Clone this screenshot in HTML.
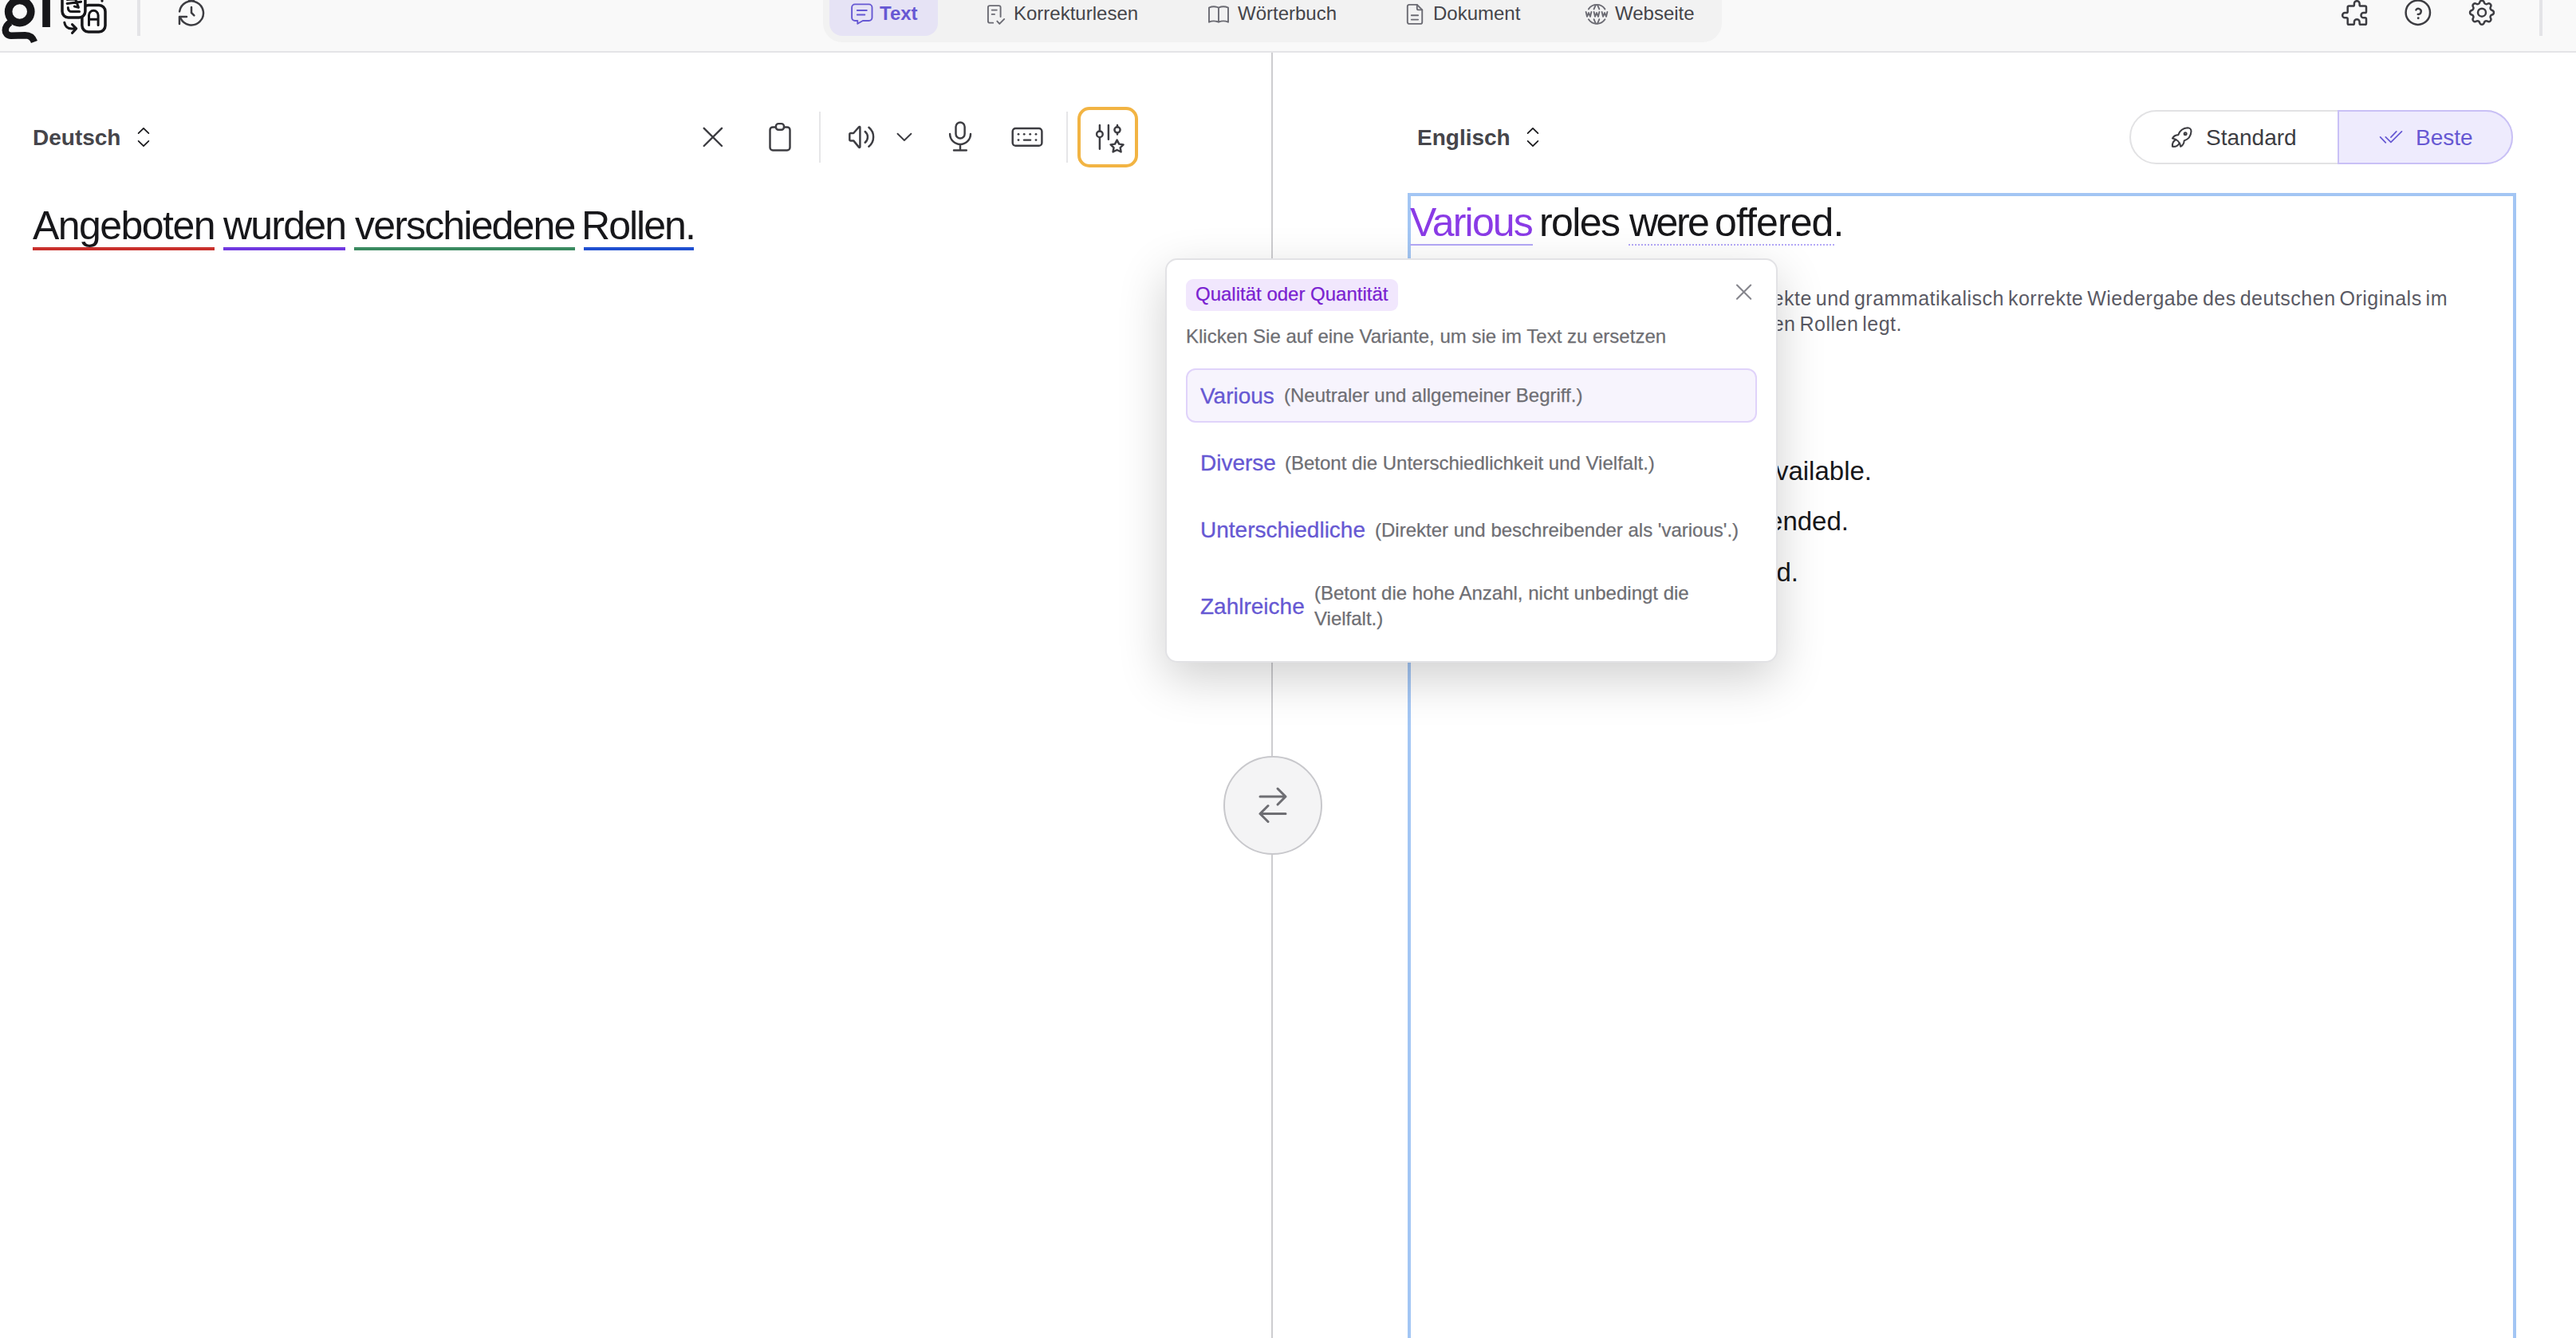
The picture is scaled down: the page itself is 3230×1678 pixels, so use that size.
<!DOCTYPE html>
<html><head><meta charset="utf-8">
<style>
html,body{margin:0;padding:0;}
body{width:3230px;height:1678px;overflow:hidden;position:relative;background:#fff;font-family:"Liberation Sans",sans-serif;color:#17171a;}
.a{position:absolute;}
.t{position:absolute;white-space:nowrap;}
svg.ic{position:absolute;left:0;top:0;overflow:visible;}
.st{fill:none;stroke-linecap:round;stroke-linejoin:round;}
</style></head><body>

<!-- HEADER -->
<div class="a" style="left:0;top:0;width:3230px;height:64px;background:#f9f9f9;"></div>
<div class="a" style="left:0;top:64px;width:3230px;height:2px;background:#e4e4e7;"></div>
<div class="a" style="left:172px;top:0;width:4px;height:45px;background:#e4e4e7;"></div>
<div class="a" style="left:3184px;top:0;width:4px;height:45px;background:#e4e4e7;"></div>

<!-- nav -->
<div class="a" style="left:1032px;top:-30px;width:1127px;height:83px;background:#f2f2f2;border-radius:24px;"></div>
<div class="a" style="left:1040px;top:-30px;width:136px;height:75px;background:#e6e3f5;border-radius:16px;"></div>
<div class="t" style="left:1103px;top:5px;font-size:24px;line-height:24px;font-weight:700;color:#6658d3;">Text</div>
<div class="t" style="left:1271px;top:5px;font-size:24px;line-height:24px;color:#45454a;">Korrekturlesen</div>
<div class="t" style="left:1552px;top:5px;font-size:24px;line-height:24px;color:#45454a;">Wörterbuch</div>
<div class="t" style="left:1797px;top:5px;font-size:24px;line-height:24px;color:#45454a;">Dokument</div>
<div class="t" style="left:2025px;top:5px;font-size:24px;line-height:24px;color:#45454a;">Webseite</div>

<!-- main divider -->
<div class="a" style="left:1594px;top:66px;width:2px;height:1612px;background:#cdcdd0;"></div>

<!-- toolbar dividers -->
<div class="a" style="left:1027px;top:140px;width:2px;height:64px;background:#e6e6e8;"></div>
<div class="a" style="left:1337px;top:140px;width:2px;height:64px;background:#e6e6e8;"></div>
<div class="a" style="left:1351px;top:134px;width:68px;height:68px;border:4px solid #f2b443;border-radius:15px;"></div>

<!-- Language labels -->
<div class="t" style="left:41px;top:159px;font-size:28px;line-height:28px;font-weight:700;color:#45454a;">Deutsch</div>
<div class="t" style="left:1777px;top:159px;font-size:28px;line-height:28px;font-weight:700;color:#45454a;">Englisch</div>

<!-- toggle -->
<div class="a" style="left:2670px;top:138px;width:481px;height:68px;border-radius:34px;border:2px solid #e2e2e4;box-sizing:border-box;background:#fff;"></div>
<div class="a" style="left:2931px;top:138px;width:220px;height:68px;border-radius:0 34px 34px 0;border:2px solid #c9c0f6;box-sizing:border-box;background:#eeebfd;"></div>
<div class="t" style="left:2766px;top:159px;font-size:28px;line-height:28px;color:#3d3d42;">Standard</div>
<div class="t" style="left:3029px;top:159px;font-size:28px;line-height:28px;color:#6658d3;">Beste</div>

<!-- source text -->
<div class="t" style="left:41px;top:258px;font-size:50px;line-height:50px;letter-spacing:-1.55px;">Angeboten</div>
<div class="t" style="left:280px;top:258px;font-size:50px;line-height:50px;letter-spacing:-1.8px;">wurden</div>
<div class="t" style="left:445px;top:258px;font-size:50px;line-height:50px;letter-spacing:-1.82px;">verschiedene</div>
<div class="t" style="left:729px;top:258px;font-size:50px;line-height:50px;letter-spacing:-1.97px;">Rollen.</div>
<div class="a" style="left:41px;top:310px;width:228px;height:4px;background:#c9302c;"></div>
<div class="a" style="left:280px;top:310px;width:153px;height:4px;background:#7038e0;"></div>
<div class="a" style="left:444px;top:310px;width:277px;height:4px;background:#3a8a60;"></div>
<div class="a" style="left:732px;top:310px;width:138px;height:4px;background:#1f4fd0;"></div>

<!-- swap -->
<div class="a" style="left:1534px;top:948px;width:120px;height:120px;border:2px solid #c8c8cc;border-radius:50%;background:#f4f4f5;"></div>

<!-- blue box -->
<div class="a" style="left:1765px;top:242px;width:1382px;height:1500px;border:4px solid #a3c6f4;"></div>

<!-- translation -->
<div class="t" style="left:1768px;top:254px;font-size:50px;line-height:50px;letter-spacing:-1.83px;color:#8a3be6;">Various</div>
<div class="t" style="left:1930px;top:254px;font-size:50px;line-height:50px;letter-spacing:-1.6px;">roles</div>
<div class="t" style="left:2043px;top:254px;font-size:50px;line-height:50px;letter-spacing:-2.5px;">were</div>
<div class="t" style="left:2150px;top:254px;font-size:50px;line-height:50px;letter-spacing:-0.9px;">offered.</div>
<div class="a" style="left:1768px;top:306px;width:154px;height:2px;background:#b3a8f7;"></div>
<div class="a" style="left:2042px;top:306px;width:260px;height:2px;background:repeating-linear-gradient(90deg,#b3a8f7 0 2px,transparent 2px 4px);"></div>

<!-- explanation & alternatives (mostly behind popup) -->
<div class="t" style="right:161px;top:362px;font-size:25px;line-height:25px;color:#5a5a64;letter-spacing:0.5px;word-spacing:-2.5px;">Diese Übersetzung ist eine direkte und grammatikalisch korrekte Wiedergabe des deutschen Originals im</div>
<div class="t" style="right:845px;top:394px;font-size:25px;line-height:25px;color:#5a5a64;letter-spacing:0.5px;word-spacing:-2.5px;">Passiv, die den Fokus auf die verschiedenen Rollen legt.</div>
<div class="t" style="right:883px;top:574px;font-size:33px;line-height:33px;color:#17171a;">A variety of roles were available.</div>
<div class="t" style="right:912px;top:637px;font-size:33px;line-height:33px;color:#17171a;">Several roles were recommended.</div>
<div class="t" style="right:975px;top:701px;font-size:33px;line-height:33px;color:#17171a;">Different roles were offered.</div>

<!-- ICONS -->
<svg class="ic" width="3230" height="1678" viewBox="0 0 3230 1678">
<!-- logo g -->
<g fill="none" stroke="#17171a">
 <circle cx="24.7" cy="14.5" r="14.1" stroke-width="9.6"/>
 <path d="M13 28 C 5 33, 4 44, 14 44.8 L 31.5 44.3 C 37.5 44.3, 41 47, 43 52.5" stroke-width="8.5" stroke-linecap="butt"/>
</g>
<rect x="53.2" y="0" width="9.7" height="34" fill="#17171a"/>
<!-- translate icon -->
<g fill="#fff" stroke="#17171a" stroke-width="3.5" stroke-linecap="round" stroke-linejoin="round">
 <rect x="102.9" y="6.4" width="29.1" height="33.6" rx="8"/>
 <rect x="78" y="-12" width="28.9" height="33.9" rx="7.6"/>
 <path d="M84.3 -0.6 L100.5 -1.6 M84.1 4.4 L101.6 2.2 M94.2 -2 L98.2 8.6 M93.4 8.1 L98.4 9.4 M85.3 9.4 C 85.3 12.5, 87 14.5, 90 14.5 L99.6 14.5" fill="none" stroke-width="3"/>
 <path d="M111.5 31.6 V19.1 A 5.8 5.8 0 0 1 123.1 19.1 V31.6 M111.5 24.2 H123.1" fill="none" stroke-width="3"/>
 <path d="M80.8 28.3 C 81.5 32.5, 84.5 36, 90 36 L95.5 36 M90.5 30.6 L95.7 35.9 L90.5 41.4" fill="none" stroke-width="3"/>
 <path d="M128 -3 V1.3" fill="none" stroke-width="3"/>
</g>
<!-- history -->
<g class="st" stroke="#3d3d42" stroke-width="2.5">
 <path d="M225.13 14.42 A 15 15 0 1 1 226.4 22.74"/>
 <path d="M234 20.9 H225 V29.9"/>
 <path d="M240 8.9 V16 L243.4 19.4"/>
</g>
<rect x="236" y="0" width="8" height="1.3" fill="#3d3d42"/>
<rect x="3028" y="0" width="8" height="1.1" fill="#3d3d42"/>
<!-- nav icons -->
<g class="st" stroke="#6658d3" stroke-width="1.9" transform="translate(0.8 -0.8)">
 <path d="M1071.3 6.2 H1088.7 A4 4 0 0 1 1092.7 10.2 V22.8 A4 4 0 0 1 1088.7 26.8 H1081 L1074.5 30.6 V26.8 H1071.3 A4 4 0 0 1 1067.3 22.8 V10.2 A4 4 0 0 1 1071.3 6.2 Z"/>
 <path d="M1074 13.8 H1086 M1074 19.3 H1083.5"/>
</g>
<g class="st" stroke="#6b6b73" stroke-width="1.9">
 <path d="M1245.2 28.65 H1241.1 A2.2 2.2 0 0 1 1238.9 26.45 V9.3 A2.2 2.2 0 0 1 1241.1 7.1 H1252.4 A2.2 2.2 0 0 1 1254.6 9.3 V21"/>
 <path d="M1243.7 12.6 H1249.8 M1243.7 17.9 H1247"/>
 <path d="M1250.3 26.6 L1253.3 29.9 L1259.2 23.9"/>
 <path d="M1516 9.6 A14.5 14.5 0 0 1 1528 9.6 A14.5 14.5 0 0 1 1540 9.6 M1516 27.7 A14.5 14.5 0 0 1 1528 27.7 A14.5 14.5 0 0 1 1540 27.7 M1516 9.6 V27.7 M1528 9.6 V27.7 M1540 9.6 V27.7"/>
 <path d="M1776.8 5.9 H1767 A2.2 2.2 0 0 0 1764.8 8.1 V27.7 A2.2 2.2 0 0 0 1767 29.9 H1781.05 A2.2 2.2 0 0 0 1783.25 27.7 V12.4 Z"/>
 <path d="M1776.8 5.9 V10.4 A2 2 0 0 0 1778.8 12.4 H1783.25"/>
 <path d="M1769.8 19.2 H1778.1 M1769.8 24.6 H1778.1"/>
 <path d="M1991.9 11.4 A12.3 12.3 0 0 1 2012.4 11.4 M1991.9 24.2 A12.3 12.3 0 0 0 2012.4 24.2"/>
 <path d="M1998.6 11.4 L2000.8 6.4 M2005.3 11.4 L2003.1 6.4 M1998.6 24.2 L2000.8 29.5 M2005.3 24.2 L2003.1 29.5"/>
 <path d="M1988.6 14.9 L1990 20.8 L1992 16 L1994 20.8 L1995.4 14.9 M1998.6 14.9 L2000 20.8 L2002 16 L2004 20.8 L2005.4 14.9 M2008.6 14.9 L2010 20.8 L2012 16 L2014 20.8 L2015.4 14.9"/>
</g>
<!-- right header icons -->
<g class="st" stroke="#3d3d42" stroke-width="2.5">
 <path d="M2945.3 7.6 H2950.3 Q2951.9 7.6 2951.9 6 V4.5 A3.35 3.35 0 0 1 2958.6 4.5 V6 Q2958.6 7.6 2960.2 7.6 H2965.4 Q2967 7.6 2967 9.2 V14.4 Q2967 16 2965.4 16 H2963.6 A3.15 3.15 0 0 0 2963.6 22.3 H2965.4 Q2967 22.3 2967 23.9 V29.2 Q2967 30.8 2965.4 30.8 H2960.2 Q2958.6 30.8 2958.6 29.2 V27.6 A3.35 3.35 0 0 0 2951.9 27.6 V29.2 Q2951.9 30.8 2950.3 30.8 H2945.3 Q2943.7 30.8 2943.7 29.2 V23.9 Q2943.7 22.3 2942.1 22.3 H2940.3 A3.15 3.15 0 0 1 2940.3 16 H2942.1 Q2943.7 16 2943.7 14.4 V9.2 Q2943.7 7.6 2945.3 7.6 Z"/>
 <circle cx="3031.8" cy="15.7" r="15.2"/>
 <path d="M3029.4 12.4 A3.5 3.5 0 1 1 3031.7 17.85" stroke-width="2.4"/>
 <g transform="translate(3092.08 -4.22) scale(1.66)" stroke-width="1.5"><path d="M10.325 4.317c.426 -1.756 2.924 -1.756 3.35 0a1.724 1.724 0 0 0 2.573 1.066c1.543 -.94 3.31 .826 2.37 2.37a1.724 1.724 0 0 0 1.065 2.572c1.756 .426 1.756 2.924 0 3.35a1.724 1.724 0 0 0 -1.066 2.573c.94 1.543 -.826 3.31 -2.37 2.37a1.724 1.724 0 0 0 -2.572 1.065c-.426 1.756 -2.924 1.756 -3.35 0a1.724 1.724 0 0 0 -2.573 -1.066c-1.543 .94 -3.31 -.826 -2.37 -2.37a1.724 1.724 0 0 0 -1.065 -2.572c-1.756 -.426 -1.756 -2.924 0 -3.35a1.724 1.724 0 0 0 1.066 -2.573c-.94 -1.543 .826 -3.31 2.37 -2.37c1 .608 2.296 .07 2.572 -1.065z"/></g>
 <circle cx="3112" cy="15.7" r="5"/>
</g>
<circle cx="3032.2" cy="22.7" r="1.45" fill="#3d3d42"/>
<!-- left toolbar icons -->
<g class="st" stroke="#3d3d42" stroke-width="2.45">
 <path d="M882.7 160.8 L905 183 M905 160.8 L882.7 183"/>
 <path d="M972.9 159.4 H969 A3.5 3.5 0 0 0 965.5 162.9 V185 A3.5 3.5 0 0 0 969 188.5 H987 A3.5 3.5 0 0 0 990.5 185 V162.9 A3.5 3.5 0 0 0 987 159.4 H983"/>
 <rect x="972.9" y="155.1" width="10.1" height="7.6" rx="3.2"/>
 <path d="M1065.3 168.5 A1.5 1.5 0 0 1 1066.8 167 H1070.2 L1077 159.2 A0.8 0.8 0 0 1 1078.4 159.8 V184 A0.8 0.8 0 0 1 1077 184.6 L1070.2 176.4 H1066.8 A1.5 1.5 0 0 1 1065.3 174.9 Z"/>
 <path d="M1084.7 165 A9 9 0 0 1 1084.7 178.8"/>
 <path d="M1089.4 159.75 A15.5 15.5 0 0 1 1089.4 183.8"/>
 <path d="M1125.5 167.7 L1133.9 176 L1142.4 167.7" stroke-width="1.9"/>
 <path d="M1198.5 159.1 A5.55 5.55 0 0 1 1209.6 159.1 V167.9 A5.55 5.55 0 0 1 1198.5 167.9 Z"/>
 <path d="M1191.1 168 A12.95 12.95 0 0 0 1217 168 M1204 181 V188.4 M1196 188.4 H1211.8"/>
 <rect x="1269.7" y="160.9" width="36.7" height="21.8" rx="3.8"/>
 <path d="M1284 175.6 H1292"/>
</g>
<g fill="#3d3d42">
 <circle cx="1277" cy="168.3" r="1.4"/><circle cx="1284.2" cy="168.3" r="1.4"/><circle cx="1291.7" cy="168.3" r="1.4"/><circle cx="1299" cy="168.3" r="1.4"/>
 <circle cx="1277" cy="175.6" r="1.4"/><circle cx="1299" cy="175.6" r="1.4"/>
</g>
<!-- sliders star -->
<g class="st" stroke="#3d3d42" stroke-width="2.45">
 <path d="M1378.9 156.9 V164.5 M1378.9 172.1 V186.8 M1389.9 156.9 V174.8 M1401 156.9 V159.2 M1401 166.4 V168.6"/>
 <circle cx="1378.9" cy="168.3" r="3.8"/>
 <circle cx="1401" cy="162.8" r="3.6"/>
 <path d="M1400.6 175.6 L1403.2 180.6 L1408.6 181.4 L1404.7 185.2 L1405.6 190.5 L1400.6 188 L1395.6 190.5 L1396.5 185.2 L1392.6 181.4 L1398 180.6 Z"/>
</g>
<!-- swap arrows -->
<g class="st" stroke="#6e6e73" stroke-width="3">
 <path d="M1580 999 H1612 M1602 989 L1612 999 L1602 1009"/>
 <path d="M1612 1020.5 H1580 M1590 1010.5 L1580 1020.5 L1590 1030.5"/>
</g>
<!-- chevrons -->
<g class="st" stroke="#17171a" stroke-width="1.7">
 <path d="M173.6 167.2 L180 160.8 L186.4 167.2 M173.6 176.8 L180 183.2 L186.4 176.8"/>
 <path d="M1915.6 167.2 L1922 160.8 L1928.4 167.2 M1915.6 176.8 L1922 183.2 L1928.4 176.8"/>
</g>
<!-- rocket -->
<g transform="translate(2718.1 154.4) scale(1.47)" class="st" stroke="#3d3d42" stroke-width="1.4">
 <path d="M4 13a8 8 0 0 1 7 7a6 6 0 0 0 3 -5a9 9 0 0 0 6 -8a3 3 0 0 0 -3 -3a9 9 0 0 0 -8 6a6 6 0 0 0 -5 3"/>
 <path d="M7 14a6 6 0 0 0 -3 6a6 6 0 0 0 6 -3"/>
 <circle cx="15" cy="9" r="1"/>
</g>
<!-- checks -->
<g class="st" stroke="#6658d3" stroke-width="1.7">
 <path d="M2984.6 171.9 L2991.3 178.9 M2991.3 171.9 L2997.9 178.4 L3011.5 164.8 M2997.9 172.2 L3004.8 164.8"/>
</g>
</svg>

<!-- POPUP -->
<div class="a" style="left:1461px;top:324px;width:768px;height:507px;box-sizing:border-box;background:#fff;border:2px solid #e2e2e5;border-radius:15px;box-shadow:0 20px 60px rgba(0,0,0,0.19);z-index:10;">
</div>
<div class="a" style="left:0;top:0;width:3230px;height:1678px;z-index:11;">
 <div class="a" style="left:1487px;top:350px;width:266px;height:40px;background:#f1e7fd;border-radius:9px;"></div>
 <div class="t" style="left:1499px;top:357px;font-size:24px;line-height:24px;color:#7a1fd1;-webkit-text-stroke:0.25px #7a1fd1;">Qualität oder Quantität</div>
 <svg class="ic" width="3230" height="1678" viewBox="0 0 3230 1678"><path class="st" stroke="#85858c" stroke-width="2.1" d="M2178 357.6 L2195.2 374.8 M2195.2 357.6 L2178 374.8"/></svg>
 <div class="t" style="left:1487px;top:410px;font-size:24px;line-height:24px;color:#6e6e73;-webkit-text-stroke:0.25px #6e6e73;">Klicken Sie auf eine Variante, um sie im Text zu ersetzen</div>
 <div class="a" style="left:1487px;top:462px;width:716px;height:68px;box-sizing:border-box;background:#f7f4fd;border:2px solid #e0d3fa;border-radius:12px;"></div>
 <div class="t" style="left:1505px;top:483px;font-size:28px;line-height:28px;color:#6658d3;-webkit-text-stroke:0.3px #6658d3;">Various</div>
 <div class="t" style="left:1610px;top:484px;font-size:24px;line-height:24px;color:#6e6e73;-webkit-text-stroke:0.25px #6e6e73;">(Neutraler und allgemeiner Begriff.)</div>
 <div class="t" style="left:1505px;top:567px;font-size:28px;line-height:28px;color:#6658d3;-webkit-text-stroke:0.3px #6658d3;">Diverse</div>
 <div class="t" style="left:1611px;top:569px;font-size:24px;line-height:24px;color:#6e6e73;-webkit-text-stroke:0.25px #6e6e73;">(Betont die Unterschiedlichkeit und Vielfalt.)</div>
 <div class="t" style="left:1505px;top:651px;font-size:28px;line-height:28px;color:#6658d3;-webkit-text-stroke:0.3px #6658d3;">Unterschiedliche</div>
 <div class="t" style="left:1724px;top:653px;font-size:24px;line-height:24px;color:#6e6e73;-webkit-text-stroke:0.25px #6e6e73;">(Direkter und beschreibender als 'various'.)</div>
 <div class="t" style="left:1505px;top:747px;font-size:28px;line-height:28px;color:#6658d3;-webkit-text-stroke:0.3px #6658d3;">Zahlreiche</div>
 <div class="a" style="left:1648px;top:728px;font-size:24px;line-height:31.5px;color:#6e6e73;width:560px;-webkit-text-stroke:0.25px #6e6e73;">(Betont die hohe Anzahl, nicht unbedingt die<br>Vielfalt.)</div>
</div>

</body></html>
